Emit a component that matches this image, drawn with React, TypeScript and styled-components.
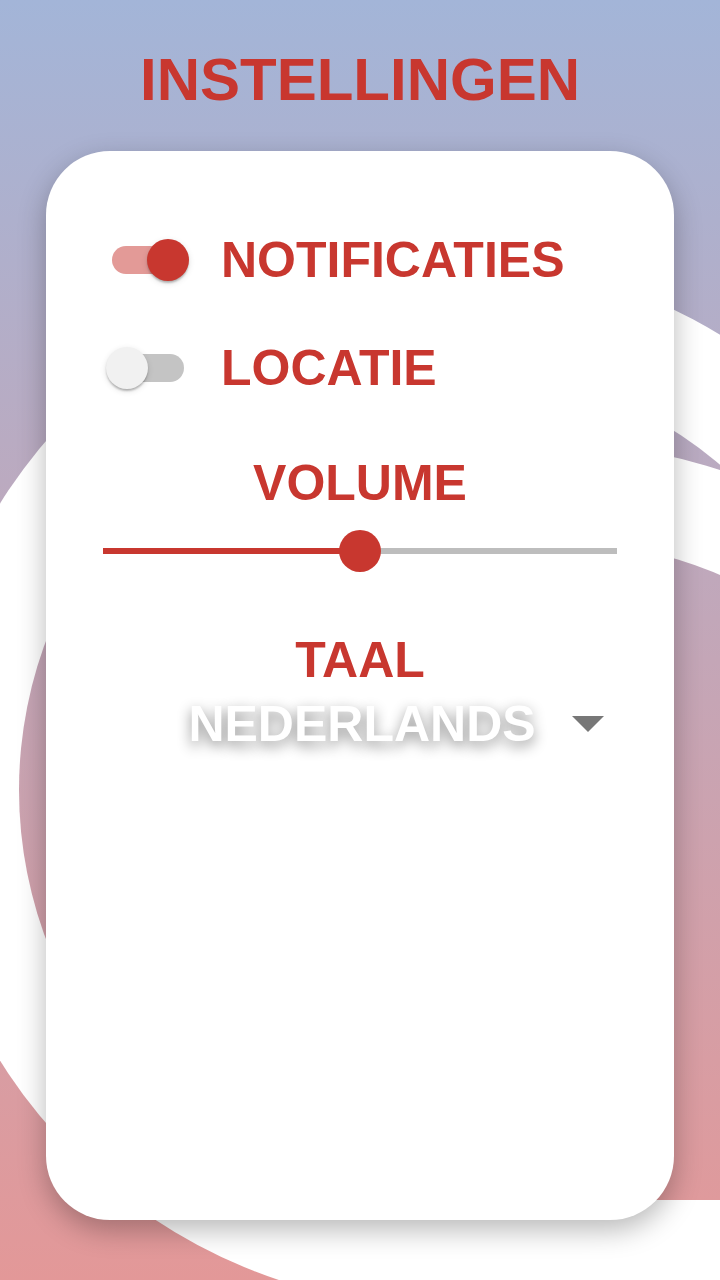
import React, { useState } from "react";
import styled, { createGlobalStyle } from "styled-components";

const RED = "#c8372f";

const GlobalStyle = createGlobalStyle`
  html, body {
    margin: 0;
    padding: 0;
    background: #ffffff;
  }
  body {
    font-family: "Liberation Sans", Arial, sans-serif;
  }
  * { box-sizing: border-box; }
`;

const Page = styled.div`
  position: relative;
  width: 720px;
  height: 1280px;
  overflow: hidden;
  display: flex;
  flex-direction: column;
  align-items: center;
  padding-top: 50px;
`;

const Backdrop = styled.svg`
  position: absolute;
  inset: 0;
  z-index: 0;
`;

const Title = styled.h1`
  position: relative;
  z-index: 1;
  margin: 0;
  font-family: "Liberation Sans", Arial, sans-serif;
  font-weight: 700;
  font-size: 60px;
  line-height: 60px;
  color: ${RED};
  letter-spacing: 0;
`;

const Card = styled.section`
  position: relative;
  z-index: 1;
  margin-top: 41px;
  width: 628px;
  height: 1069px;
  background: #ffffff;
  border-radius: 64px;
  box-shadow: 0 10px 28px rgba(0, 0, 0, 0.28);
  padding: 88px 57px 0;
  display: flex;
  flex-direction: column;
`;

const Row = styled.div<{ $mt?: number }>`
  display: flex;
  align-items: center;
  gap: 31px;
  height: 42px;
  margin-top: ${(p) => p.$mt ?? 0}px;
  margin-left: 3px;
`;

const Label = styled.span`
  font-family: "Liberation Sans", Arial, sans-serif;
  font-weight: 700;
  font-size: 50px;
  line-height: 48px;
  color: ${RED};
`;

const Heading = styled.div<{ $mt: number }>`
  margin-top: ${(p) => p.$mt}px;
  text-align: center;
  font-family: "Liberation Sans", Arial, sans-serif;
  font-weight: 700;
  font-size: 50px;
  line-height: 48px;
  color: ${RED};
`;

const SwitchBox = styled.button<{ $on: boolean }>`
  position: relative;
  flex: none;
  width: 84px;
  height: 42px;
  padding: 0;
  border: 0;
  background: transparent;
  cursor: pointer;
`;

const Track = styled.span<{ $on: boolean }>`
  display: block;
  margin: 7px 6px;
  width: 72px;
  height: 28px;
  border-radius: 14px;
  background: ${(p) => (p.$on ? "#e39a97" : "#c4c4c4")};
`;

const Thumb = styled.span<{ $on: boolean }>`
  position: absolute;
  top: 0;
  left: ${(p) => (p.$on ? 41 : 0)}px;
  width: 42px;
  height: 42px;
  border-radius: 50%;
  background: ${(p) => (p.$on ? RED : "#f1f1f1")};
  box-shadow: 0 3px 3px -2px rgba(0, 0, 0, 0.2), 0 2px 2px rgba(0, 0, 0, 0.14),
    0 2px 6px rgba(0, 0, 0, 0.12);
`;

const SliderBox = styled.div`
  position: relative;
  margin-top: 23px;
  height: 42px;
  display: flex;
  align-items: center;
`;

const Rail = styled.div`
  flex: 1;
  height: 6px;
  background: #bdbdbd;
  display: flex;
`;

const Fill = styled.div`
  height: 100%;
  background: ${RED};
`;

const Knob = styled.div`
  position: absolute;
  top: 0;
  width: 42px;
  height: 42px;
  margin-left: -21px;
  border-radius: 50%;
  background: ${RED};
`;

const SelectBox = styled.div`
  position: relative;
  margin-top: 15px;
  height: 50px;
  display: flex;
  justify-content: center;
  align-items: center;
`;

const SelectValue = styled.span`
  font-family: "Liberation Sans", Arial, sans-serif;
  font-weight: 700;
  font-size: 50px;
  line-height: 50px;
  color: #ffffff;
  text-shadow: 0 5px 14px rgba(0, 0, 0, 0.45);
  margin-left: 4px;
`;

const Caret = styled.svg`
  position: absolute;
  right: 13px;
  top: 17px;
`;

function Switch({ on, onToggle }: { on: boolean; onToggle: () => void }) {
  return (
    <SwitchBox $on={on} onClick={onToggle} aria-pressed={on}>
      <Track $on={on} />
      <Thumb $on={on} />
    </SwitchBox>
  );
}

export default function App() {
  const [notif, setNotif] = useState(true);
  const [loc, setLoc] = useState(false);
  const volume = 50;

  return (
    <>
      <GlobalStyle />
      <Page>
        <Backdrop width="720" height="1280" viewBox="0 0 720 1280">
          <defs>
            <linearGradient id="bg" gradientUnits="userSpaceOnUse" x1="0" y1="0" x2="0" y2="1280">
              <stop offset="0" stopColor="#a3b5d8" />
              <stop offset="1" stopColor="#e39898" />
            </linearGradient>
            <clipPath id="rightSide">
              <rect x="360" y="0" width="360" height="1280" />
            </clipPath>
          </defs>
          <rect width="720" height="1280" fill="url(#bg)" />
          <circle cx="445" cy="782" r="525" fill="#ffffff" />
          <circle cx="445" cy="790" r="426" fill="url(#bg)" />
          <g clipPath="url(#rightSide)">
            <circle cx="567" cy="925" r="480" fill="#ffffff" />
            <circle cx="567" cy="925" r="382" fill="url(#bg)" />
          </g>
          <rect x="300" y="1200" width="420" height="80" fill="#ffffff" />
        </Backdrop>

        <Title>INSTELLINGEN</Title>

        <Card>
          <Row>
            <Switch on={notif} onToggle={() => setNotif(!notif)} />
            <Label>NOTIFICATIES</Label>
          </Row>
          <Row $mt={66}>
            <Switch on={loc} onToggle={() => setLoc(!loc)} />
            <Label>LOCATIE</Label>
          </Row>

          <Heading $mt={70}>VOLUME</Heading>
          <SliderBox>
            <Rail>
              <Fill style={{ width: `${volume}%` }} />
            </Rail>
            <Knob style={{ left: `${volume}%` }} />
          </SliderBox>

          <Heading $mt={64}>TAAL</Heading>
          <SelectBox>
            <SelectValue>NEDERLANDS</SelectValue>
            <Caret width="32" height="16" viewBox="0 0 32 16">
              <path d="M0 0 L32 0 L16 16 Z" fill="#777777" />
            </Caret>
          </SelectBox>
        </Card>
      </Page>
    </>
  );
}
